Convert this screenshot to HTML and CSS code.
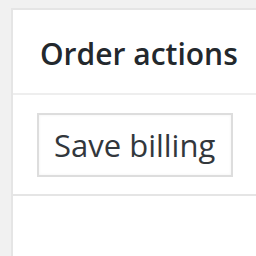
FILE: index.html
```html
<!DOCTYPE html>
<html>
<head>
<meta charset="utf-8">
<link rel="stylesheet" href="styles.css">
</head>
<body>
<div class="panel">
  <div class="panel-head">
    <h2 class="panel-title">Order actions</h2>
  </div>
  <div class="panel-body">
    <button class="btn" type="button">Save billing</button>
  </div>
</div>
</body>
</html>
```
FILE: styles.css
```css
html, body {
  margin: 0;
  padding: 0;
  background: #f1f1f1;
  width: 256px;
  height: 256px;
  overflow: hidden;
}
.panel {
  margin: 8px 0 0 11px;
  height: 248px;
  background: #fff;
  border-top: 2px solid #e5e5e5;
  border-left: 2px solid #e5e5e5;
  box-sizing: border-box;
  font-family: "Open Sans", "Noto Sans", sans-serif;
  color: #23282d;
  overflow: hidden;
}
.panel-head {
  height: 83px;
  border-bottom: 2px solid #eeeeee;
  display: flex;
  align-items: center;
  padding-left: 27px;
  white-space: nowrap;
}
.panel-title {
  margin: 0;
  font-size: 30px;
  font-weight: 600;
  line-height: 1;
  position: relative;
  top: 2px;
}
.panel-body {
  padding: 18px 24px 17px;
  border-bottom: 2px solid #e5e5e5;
}
.btn {
  display: block;
  height: 64px;
  width: 196px;
  padding: 0 0 0 15px;
  text-align: left;
  border: 2px solid #dddddd;
  background: #ffffff;
  box-shadow: inset 0 0 3px rgba(0,0,0,0.06);
  font-family: "Open Sans", "Noto Sans", sans-serif;
  font-size: 31px;
  color: #32373c;
  border-radius: 0;
  white-space: nowrap;
  line-height: 1;
}
```
